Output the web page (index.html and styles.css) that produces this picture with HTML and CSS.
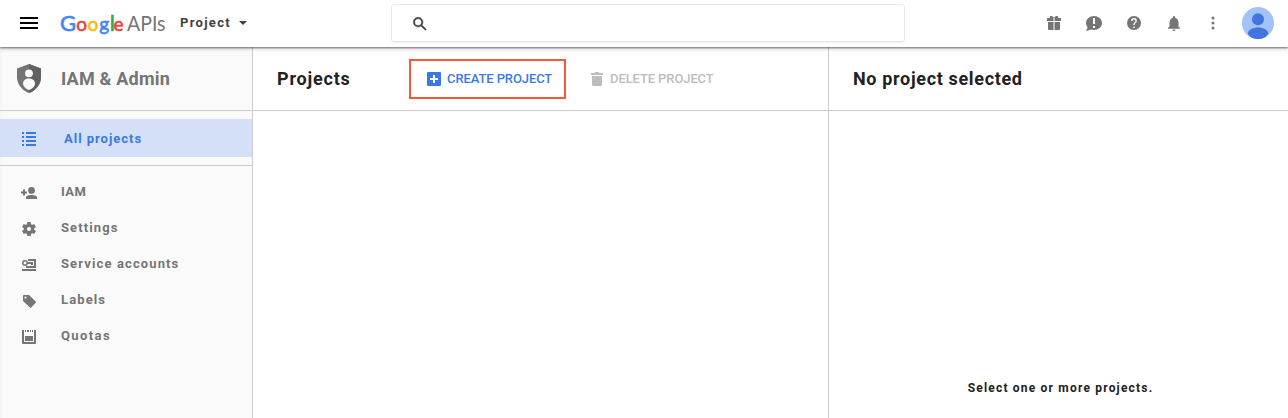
FILE: index.html
```html
<!DOCTYPE html>
<html lang="en">
<head>
<meta charset="utf-8">
<title>IAM &amp; Admin</title>
<link rel="stylesheet" href="styles.css">
</head>
<body>
<header class="topbar">
  <div class="brand">
    <svg class="menu" width="18" height="12" viewBox="0 0 18 12"><path d="M0 0h18v2H0zM0 5h18v2H0zM0 10h18v2H0z"/></svg>
    <svg class="logo" width="106" height="30" viewBox="0 0 106 30" aria-label="Google APIs">
      <text y="21.500" class="logo-google"><tspan x="-1" class="b" font-size="22">G</tspan><tspan x="15.200" class="r">o</tspan><tspan x="26.600" class="y">o</tspan><tspan x="38.300" class="b">g</tspan><tspan x="48.700" class="g" font-size="22">l</tspan><tspan x="52.600" class="r">e</tspan></text>
      <text x="66" y="21.500" class="logo-apis" textLength="38.500" lengthAdjust="spacingAndGlyphs">APIs</text>
    </svg>
    <span class="picker">Project</span>
    <span class="caret"></span>
  </div>
  <div class="search">
    <svg width="18" height="18" viewBox="0 0 24 24"><path d="M15.5 14h-.79l-.28-.27A6.471 6.471 0 0 0 16 9.500 6.500 6.500 0 1 0 9.500 16c1.610 0 3.090-.59 4.230-1.570l.27.28v.79l5 4.990L20.490 19l-4.990-5zm-6 0C7.010 14 5 11.990 5 9.500S7.010 5 9.500 5 14 7.010 14 9.500 11.990 14 9.500 14z" stroke="#424242" stroke-width=".6"/></svg>
  </div>
  <div class="tools">
    <svg width="14" height="14" viewBox="0 0 14 14"><path d="M0 2h3.200C1.700.300 4-.800 5.500.300L7 1.800 8.500.300C10-.800 12.300.300 10.800 2H14v3H7.500V2h-1v3H0zM1 6h5.500v8H2a1 1 0 0 1-1-1zM7.500 6H13v7a1 1 0 0 1-1 1H7.500z"/></svg>
    <svg width="16" height="15" viewBox="0 0 16 15"><path fill-rule="evenodd" d="M8 0c4.400 0 8 3.100 8 7s-3.600 7-8 7c-1 0-2-.2-2.900-.5L0 15l1.600-3.700C.6 10.100 0 8.600 0 7c0-3.900 3.600-7 8-7zM7 2v6h2V2zM7 10v2h2v-2z"/></svg>
    <svg width="14" height="14" viewBox="2 2 20 20"><path d="M12 2a10 10 0 1 0 0 20 10 10 0 0 0 0-20zm1 17h-2v-2h2v2zm2.070-7.750-.9.920C13.450 12.900 13 13.500 13 15h-2v-.5c0-1.100.45-2.100 1.170-2.830l1.240-1.260c.37-.36.59-.86.59-1.410a2 2 0 1 0-4 0H8a4 4 0 1 1 8 0c0 .88-.36 1.680-.93 2.250z"/></svg>
    <svg class="bell" width="12" height="15" viewBox="4 2.500 16 19.500" preserveAspectRatio="none"><path d="M12 22c1.100 0 2-.9 2-2h-4a2 2 0 0 0 2 2zm6-6v-5c0-3.070-1.640-5.640-4.500-6.320V4a1.500 1.500 0 0 0-3 0v.68C7.630 5.360 6 7.920 6 11v5l-2 2v1h16v-1l-2-2z"/></svg>
    <svg class="more" width="4" height="14" viewBox="0 0 4 14"><circle cx="2" cy="2" r="1.500"/><circle cx="2" cy="7" r="1.500"/><circle cx="2" cy="12" r="1.500"/></svg>
    <svg class="avatar" width="32" height="32" viewBox="0 0 32 32"><clipPath id="disc"><circle cx="16" cy="16" r="16"/></clipPath><g clip-path="url(#disc)"><path fill="#a1c2fa" d="M0 0h32v32H0z"/><circle cx="16" cy="12.200" r="6"/><path d="M5.800 27c0-4 4.700-6.500 10.200-6.500S26.200 23 26.200 27L22 32H10z"/></g></svg>
  </div>
</header>
<div class="workspace">
  <nav class="sidebar">
    <div class="side-title">
      <svg width="24" height="29" viewBox="0 0 24 29"><path fill="#757575" d="M12 0 24 4.500V13c0 7.200-5 13.600-12 16C5 26.600 0 20.200 0 13V4.500z"/><path fill="#616161" d="M12 0 24 4.500V13c0 7.200-5 13.600-12 16z"/><circle fill="#fafafa" cx="12" cy="9.300" r="3.900"/><path fill="#fafafa" d="M6 19.500c0-3 2.700-5 6-5s6 2 6 5c0 2.700-3 5.500-6 6.500-3-1-6-3.800-6-6.500z"/></svg>
      <span>IAM &amp; Admin</span>
    </div>
    <div class="group">
      <a class="item active"><svg width="14" height="14" viewBox="0 0 14 14"><path d="M0 0h2v2H0zM4 0h10v2H4zM0 4h2v2H0zM4 4h10v2H4zM0 8h2v2H0zM4 8h10v2H4zM0 12h2v2H0zM4 12h10v2H4z"/></svg><span>All projects</span></a>
    </div>
    <a class="item member"><svg width="16" height="12" viewBox="0 0 16 12"><path d="M2 2.500h2v2h2v2H4v2H2v-2H0v-2h2z"/><circle cx="10.500" cy="3.400" r="3.400"/><path d="M5 12v-1.500C5 8.700 8 8 10.500 8s5.500.7 5.500 2.500V12z"/></svg><span>IAM</span></a>
    <a class="item"><svg width="14" height="14" viewBox="2 2 20 20"><path d="M19.430 12.980c.04-.32.07-.64.07-.98s-.03-.66-.07-.98l2.110-1.650c.19-.15.24-.42.12-.64l-2-3.460c-.12-.22-.39-.3-.61-.22l-2.490 1c-.52-.4-1.080-.73-1.690-.98l-.38-2.650A.488.488 0 0 0 14 2h-4c-.25 0-.46.18-.49.42l-.38 2.650c-.61.25-1.170.59-1.690.98l-2.490-1c-.23-.09-.49 0-.61.22l-2 3.460c-.13.22-.07.49.12.64l2.110 1.650c-.04.32-.07.65-.07.98s.03.66.07.98l-2.110 1.650c-.19.15-.24.42-.12.64l2 3.460c.12.22.39.3.61.22l2.490-1c.52.4 1.080.73 1.690.98l.38 2.650c.03.24.24.42.49.42h4c.25 0 .46-.18.49-.42l.38-2.650c.61-.25 1.170-.59 1.690-.98l2.490 1c.23.09.49 0 .61-.22l2-3.460c.12-.22.07-.49-.12-.64zM12 15a3 3 0 1 1 0-6 3 3 0 0 1 0 6z"/></svg><span>Settings</span></a>
    <a class="item"><svg width="14" height="12" viewBox="0 0 14 12"><path d="M6 0h8v9H4V7h8V2H6zM0 10h14v2H0zM5 3h6v3H9V5H5z"/><circle cx="3" cy="4" r="2.200" fill="none" stroke="#757575" stroke-width="1.500"/></svg><span>Service accounts</span></a>
    <a class="item"><svg width="14" height="14" viewBox="0 0 14 14"><path fill-rule="evenodd" d="M1 2a1 1 0 0 1 1-1h5l6.600 6.600q.6.600 0 1.200l-4.400 4.800q-.6.600-1.200 0L1 7zM3.500 2.500a1.100 1.100 0 1 0 0 2.200 1.100 1.100 0 0 0 0-2.200z"/></svg><span>Labels</span></a>
    <a class="item quotas"><svg width="14" height="14" viewBox="0 0 14 14"><path d="M0 0h2v12h10V0h2v13a1 1 0 0 1-1 1H1a1 1 0 0 1-1-1zM3 0h1v2H3zM5 0h2v2H5zM8 0h1v2H8zM10 0h1v2h-1zM3 6h8v5H3z"/></svg><span>Quotas</span></a>
  </nav>
  <main class="projects">
    <div class="panel-head">
      <h1>Projects</h1>
      <button class="action create"><svg width="14" height="14" viewBox="0 0 14 14"><path fill-rule="evenodd" d="M1 0h12a1 1 0 0 1 1 1v12a1 1 0 0 1-1 1H1a1 1 0 0 1-1-1V1a1 1 0 0 1 1-1zM6 3v3H3v2h3v3h2V8h3V6H8V3z"/></svg><span>CREATE PROJECT</span></button>
      <button class="action delete"><svg width="12" height="14" viewBox="0 0 12 14"><path d="M0 1h3.500l1-1h3l1 1H12v2H0zM1 4h10v8.500a1.500 1.500 0 0 1-1.500 1.500h-7A1.500 1.500 0 0 1 1 12.500z"/></svg><span>DELETE PROJECT</span></button>
    </div>
  </main>
  <aside class="details">
    <div class="panel-head"><h1 class="none">No project selected</h1></div>
    <p>Select one or more projects.</p>
  </aside>
</div>
</body>
</html>
```
FILE: styles.css
```css
* { box-sizing: border-box; }
body { margin: 0; height: 418px; display: flex; flex-direction: column; overflow: hidden; background: #fff; color: #212121; font-family: Roboto, sans-serif; font-size: 13px; font-weight: 700; }
svg { display: block; flex: none; fill: #757575; }
.topbar { position: relative; z-index: 1; flex: none; height: 47px; display: grid; grid-template-columns: 391px 514px 1fr; background: #fff; box-shadow: 0 1px 2px rgba(0,0,0,.5), 0 2px 4px rgba(0,0,0,.15); }
.brand { display: flex; align-items: flex-start; }
.menu { margin: 17px 0 0 20px; fill: #000; }
.logo { margin: 9px 0 0 23px; overflow: visible; }
.logo-google { font-family: Lato, sans-serif; font-size: 19px; font-weight: 400; stroke-width: .6px; }
.logo-apis { font-family: Lato, sans-serif; font-size: 22px; font-weight: 400; fill: #757575; }
.b { fill: #4285f4; stroke: #4285f4; }
.r { fill: #ea4335; stroke: #ea4335; }
.y { fill: #fbbc05; stroke: #fbbc05; }
.g { fill: #34a853; stroke: #34a853; }
.picker { margin: 15px 0 0 13px; width: 59px; line-height: 16px; letter-spacing: 1.3px; color: #424242; white-space: nowrap; }
.caret { margin-top: 21px; border: 4px solid transparent; border-top-color: #424242; border-bottom: 0; }
.search { height: 38px; margin-top: 4px; padding: 10px 0 0 19px; border: 1px solid #e8e8e8; border-radius: 3px; box-shadow: 0 1px 1px rgba(0,0,0,.06); }
.search svg { fill: #424242; }
.tools { height: 46px; padding-right: 14px; display: flex; align-items: center; justify-content: flex-end; gap: 25px; }
.tools .bell { margin: 1px 4px 0 2px; }
.tools .more { margin: 0 2px; }
.tools .avatar { fill: #4274e0; }
.workspace { flex: 1; display: grid; grid-template-columns: 253px 576px 1fr; }
.sidebar { background: linear-gradient(90deg, #f4f4f4, #fafafa 4px); border-right: 1px solid #ccc; color: #757575; }
.side-title { height: 64px; padding-left: 17px; display: flex; align-items: center; gap: 20px; border-bottom: 1px solid #ccc; font-size: 18px; letter-spacing: .2px; }
.group { padding: 8px 0; margin-bottom: 8px; border-bottom: 1px solid #ccc; }
.item { height: 36px; padding-left: 22px; display: grid; grid-template-columns: 39px 1fr; align-items: center; letter-spacing: 1.12px; white-space: nowrap; }
.item span { line-height: 16px; }
.item svg { margin-top: 2px; }
.member { letter-spacing: .4px; }
.member svg { margin-left: -1px; }
.quotas { letter-spacing: 1.4px; }
.active { height: 38px; grid-template-columns: 42px 1fr; background: #d4e0f7; color: #3b78e7; letter-spacing: .98px; }
.active svg { fill: #3b78e7; }
.active span { margin-top: 2px; }
.projects { border-right: 1px solid #ccc; }
.panel-head { height: 64px; padding-left: 24px; display: flex; align-items: center; border-bottom: 1px solid #ccc; }
h1 { margin: 0; width: 132px; font-size: 18px; letter-spacing: .8px; white-space: nowrap; }
.none { width: auto; letter-spacing: .66px; }
.action { display: flex; align-items: center; padding: 0; border: 0; background: none; font: 500 13px Roboto, sans-serif; letter-spacing: -.1px; color: #bdbdbd; white-space: nowrap; }
.action svg { fill: currentColor; }
.create { width: 157px; height: 40px; padding-left: 16px; gap: 6px; border: 2px solid #f4593b; color: #3b78e7; }
.delete { margin-left: 25px; gap: 7px; }
.details { display: flex; flex-direction: column; }
.details p { margin: auto 0 22px; padding-left: 4px; text-align: center; font-size: 12px; line-height: 16px; letter-spacing: 1.2px; }
```
